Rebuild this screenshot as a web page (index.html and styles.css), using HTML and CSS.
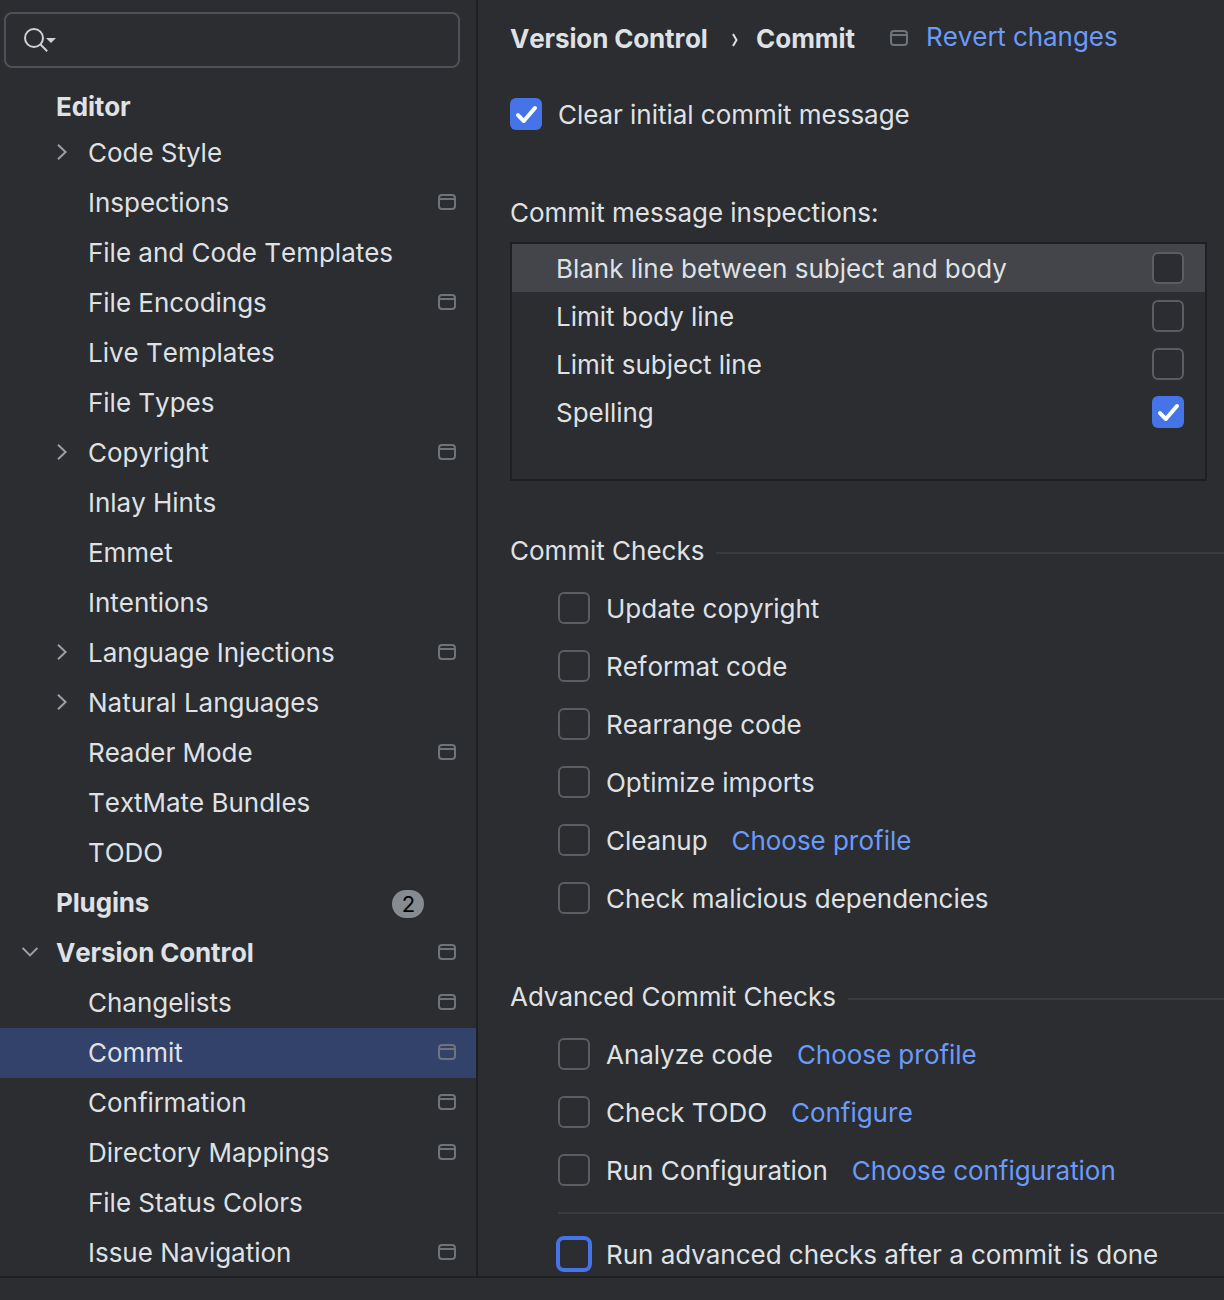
FILE: index.html
```
<!DOCTYPE html>
<html lang="en">
<head>
<meta charset="utf-8">
<title>Settings</title>
<link rel="stylesheet" href="styles.css">
</head>
<body>
<svg class="sprites" aria-hidden="true">
  <symbol id="project" viewBox="0 0 18 16"><rect x="1" y="1" width="16" height="14" rx="3"/><path d="M1 5h16"/></symbol>
  <symbol id="right" viewBox="0 0 10 16"><path d="M1 .8 8.6 8 1 15.200"/></symbol>
  <symbol id="down" viewBox="0 0 16 10"><path d="M.6 1 8 8.400 15.400 1"/></symbol>
  <symbol id="tick" viewBox="0 0 32 32"><path d="m8 17.200 5.800 5.800L25 10"/></symbol>
</svg>
<div class="window">
  <nav class="sidebar">
    <div class="search">
      <svg class="search-icon" width="32" height="24" viewBox="0 0 32 24"><circle cx="10" cy="10" r="9"/><path class="handle" d="m16.500 16.500 6.700 6.700"/><path class="drop" d="M22 10h10l-5 5z"/></svg>
    </div>
    <div class="row group sticky"><span>Editor</span></div>
    <div class="row"><svg class="right"><use href="#right"/></svg><span>Code Style</span></div>
    <div class="row"><span>Inspections</span><svg class="project"><use href="#project"/></svg></div>
    <div class="row"><span>File and Code Templates</span></div>
    <div class="row"><span>File Encodings</span><svg class="project"><use href="#project"/></svg></div>
    <div class="row"><span>Live Templates</span></div>
    <div class="row"><span>File Types</span></div>
    <div class="row"><svg class="right"><use href="#right"/></svg><span>Copyright</span><svg class="project"><use href="#project"/></svg></div>
    <div class="row"><span>Inlay Hints</span></div>
    <div class="row"><span>Emmet</span></div>
    <div class="row"><span>Intentions</span></div>
    <div class="row"><svg class="right"><use href="#right"/></svg><span>Language Injections</span><svg class="project"><use href="#project"/></svg></div>
    <div class="row"><svg class="right"><use href="#right"/></svg><span>Natural Languages</span></div>
    <div class="row"><span>Reader Mode</span><svg class="project"><use href="#project"/></svg></div>
    <div class="row"><span>TextMate Bundles</span></div>
    <div class="row"><span>TODO</span></div>
    <div class="row group"><span>Plugins</span><b class="count">2</b></div>
    <div class="row group"><svg class="down"><use href="#down"/></svg><span>Version Control</span><svg class="project"><use href="#project"/></svg></div>
    <div class="row"><span>Changelists</span><svg class="project"><use href="#project"/></svg></div>
    <div class="row selected"><span>Commit</span><svg class="project"><use href="#project"/></svg></div>
    <div class="row"><span>Confirmation</span><svg class="project"><use href="#project"/></svg></div>
    <div class="row"><span>Directory Mappings</span><svg class="project"><use href="#project"/></svg></div>
    <div class="row"><span>File Status Colors</span></div>
    <div class="row"><span>Issue Navigation</span><svg class="project"><use href="#project"/></svg></div>
  </nav>
  <main class="content">
    <header class="crumbs">
      <span class="crumb first">Version Control</span>
      <svg class="sep" width="6" height="14" viewBox="0 0 6 14"><path d="m1 1 3.500 6L1 13"/></svg>
      <span class="crumb second">Commit</span>
      <svg class="project"><use href="#project"/></svg>
      <a class="revert">Revert changes</a>
    </header>
    <div class="option clear"><i class="box on"><svg><use href="#tick"/></svg></i><span>Clear initial commit message</span></div>
    <div class="caption">Commit message inspections:</div>
    <div class="list">
      <div class="item current"><span>Blank line between subject and body</span><i class="box"></i></div>
      <div class="item"><span>Limit body line</span><i class="box"></i></div>
      <div class="item"><span>Limit subject line</span><i class="box"></i></div>
      <div class="item"><span>Spelling</span><i class="box on"><svg><use href="#tick"/></svg></i></div>
    </div>
    <h2 class="section"><span>Commit Checks</span></h2>
    <div class="options">
      <div class="option"><i class="box"></i><span>Update copyright</span></div>
      <div class="option"><i class="box"></i><span>Reformat code</span></div>
      <div class="option"><i class="box"></i><span>Rearrange code</span></div>
      <div class="option"><i class="box"></i><span>Optimize imports</span></div>
      <div class="option"><i class="box"></i><span>Cleanup</span><a>Choose profile</a></div>
      <div class="option"><i class="box"></i><span>Check malicious dependencies</span></div>
    </div>
    <h2 class="section advanced"><span>Advanced Commit Checks</span></h2>
    <div class="options">
      <div class="option"><i class="box"></i><span>Analyze code</span><a>Choose profile</a></div>
      <div class="option"><i class="box"></i><span>Check TODO</span><a>Configure</a></div>
      <div class="option"><i class="box"></i><span>Run Configuration</span><a>Choose configuration</a></div>
      <div class="rule"></div>
      <div class="option"><i class="box focus"></i><span>Run advanced checks after a commit is done</span></div>
    </div>
  </main>
</div>
</body>
</html>
```
FILE: styles.css
```
* { box-sizing: border-box; }
body {
  margin: 0;
  height: 1300px;
  overflow: hidden;
  background: #2b2d30;
  color: #dfe1e5;
  font: 26px/32px Inter, sans-serif;
  font-kerning: none;
  letter-spacing: -0.02px;
  white-space: nowrap;
}
svg { display: block; flex: none; fill: none; }
.sprites { display: none; }
.window { display: flex; height: 1278px; border-bottom: 2px solid #1e1f22; }

.sidebar { width: 478px; flex: none; border-right: 2px solid #1e1f22; }
.search {
  display: flex;
  margin: 12px 16px 0 4px;
  height: 56px;
  padding: 14px 18px;
  border: 2px solid #4e5157;
  border-radius: 8px;
}
.search-icon { stroke: #ced0d6; stroke-width: 2; }
.search-icon .drop { fill: #ced0d6; stroke: none; }
.row { display: flex; align-items: center; height: 50px; padding: 0 20px 0 88px; }
.row span { flex: 1; }
.group { padding-left: 56px; font-weight: 650; letter-spacing: -0.15px; }
.sticky { height: 42px; margin-top: 18px; }
.selected { background: #33426a; }
.project { width: 18px; height: 16px; stroke: #6f737a; stroke-width: 2; }
.row .project { margin-top: -2px; }
.right { width: 10px; height: 16px; margin: -2px 21px 0 -31px; stroke: #9da0a8; stroke-width: 2; }
.down { width: 16px; height: 10px; margin: -2px 18px 0 -34px; stroke: #9da0a8; stroke-width: 2; }
.count {
  width: 32px;
  height: 28px;
  margin: 2px 32px 0 0;
  padding-left: 1px;
  border-radius: 14px;
  background: #868a91;
  color: #000;
  font-size: 22px;
  font-weight: 400;
  line-height: 28px;
  text-align: center;
}

.content { flex: 1; min-width: 0; padding: 22px 0 0 32px; }
.crumbs { display: flex; align-items: center; height: 34px; font-weight: 650; }
.first { width: 222px; letter-spacing: -0.15px; }
.sep { width: 6px; margin-top: 1px; stroke: #dfe1e5; stroke-width: 2; }
.second { width: 134px; margin-left: 18px; }
.crumbs .project { margin-top: -2px; }
a { color: #6b9bfa; font-weight: 400; letter-spacing: -0.05px; }
.revert { margin: -4px 0 0 18px; }

.option { display: flex; align-items: center; gap: 16px; height: 58px; }
.option span, .option a, .item span { padding-top: 2px; }
.option a { margin-left: 8px; }
.clear { margin-top: 29px; }
.box { width: 32px; height: 32px; flex: none; border: 2px solid #5a5d63; border-radius: 6px; background: #2b2d30; }
.box.on { border: 0; background: #4573e8; }
.box.on svg { width: 32px; height: 32px; stroke: #fff; stroke-width: 4; stroke-linecap: round; stroke-linejoin: round; }
.box.focus { width: 36px; height: 36px; margin: 0 -2px; border: 4px solid #4573e8; border-radius: 8px; }
.caption { margin-top: 54px; }
.list { width: 697px; height: 239px; margin-top: 13px; border: 2px solid #1e1f22; }
.item { display: flex; align-items: center; justify-content: space-between; height: 48px; padding: 0 21px 0 44px; }
.item.current { background: #43454a; }
.section { display: flex; align-items: center; gap: 12px; margin: 54px 0 12px; height: 32px; font: inherit; font-kerning: none; }
.section::after { content: ""; flex: 1; height: 2px; margin-top: 3px; background: #393b40; }
.advanced { margin-top: 54px; }
.options { padding-left: 48px; }
.rule { height: 2px; margin: 13px 0 11px; background: #393b40; }
```
